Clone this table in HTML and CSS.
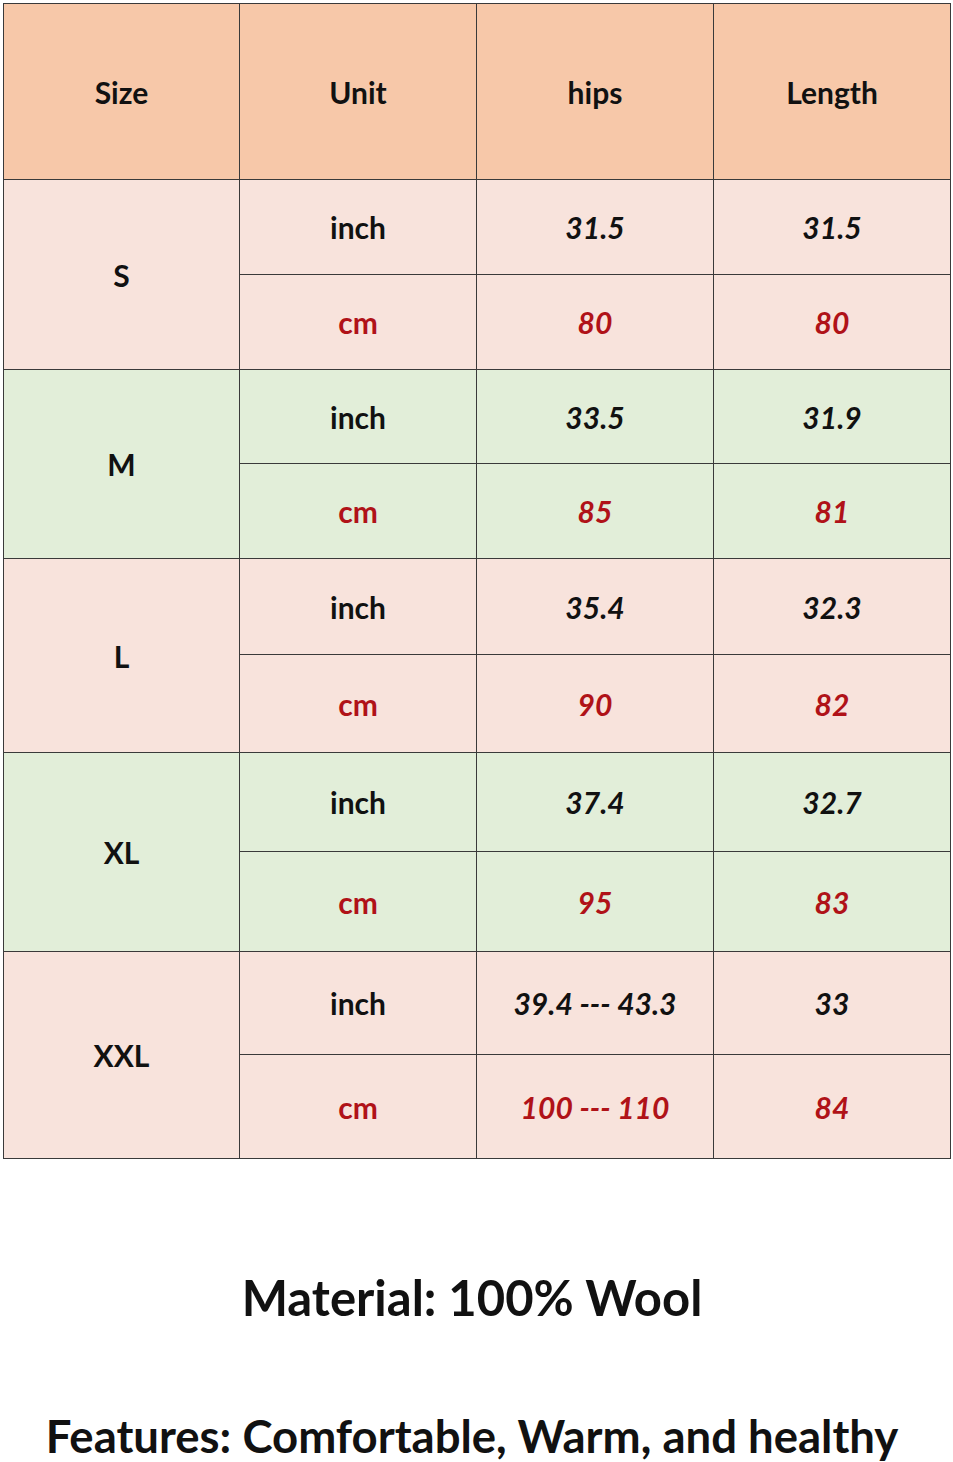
FILE: index.html
```html
<!DOCTYPE html>
<html>
<head>
<meta charset="utf-8">
<link rel="stylesheet" href="styles.css">
</head>
<body>
<div class="page">
  <table class="size-table">
    <colgroup><col class="c1"><col class="c2"><col class="c3"><col class="c4"></colgroup>
    <thead>
      <tr class="head"><th>Size</th><th>Unit</th><th>hips</th><th>Length</th></tr>
    </thead>
    <tbody>
      <tr class="pink h95"><td rowspan="2" class="size">S</td><td>inch</td><td class="num">31.5</td><td class="num">31.5</td></tr>
      <tr class="pink h95"><td class="red">cm</td><td class="num red">80</td><td class="num red">80</td></tr>
      <tr class="green h94"><td rowspan="2" class="size">M</td><td>inch</td><td class="num">33.5</td><td class="num">31.9</td></tr>
      <tr class="green h95"><td class="red">cm</td><td class="num red">85</td><td class="num red">81</td></tr>
      <tr class="pink h96"><td rowspan="2" class="size">L</td><td>inch</td><td class="num">35.4</td><td class="num">32.3</td></tr>
      <tr class="pink h98"><td class="red">cm</td><td class="num red">90</td><td class="num red">82</td></tr>
      <tr class="green h99"><td rowspan="2" class="size">XL</td><td>inch</td><td class="num">37.4</td><td class="num">32.7</td></tr>
      <tr class="green h100"><td class="red">cm</td><td class="num red">95</td><td class="num red">83</td></tr>
      <tr class="pink h103"><td rowspan="2" class="size">XXL</td><td>inch</td><td class="num">39.4 --- 43.3</td><td class="num">33</td></tr>
      <tr class="pink h104"><td class="red">cm</td><td class="num red">100 --- 110</td><td class="num red">84</td></tr>
    </tbody>
  </table>
  <div class="material">Material: 100% Wool</div>
  <div class="features">Features: Comfortable, Warm, and healthy</div>
</div>
</body>
</html>
```
FILE: styles.css
```css
html, body {
  margin: 0;
  padding: 0;
  background: #ffffff;
}
.page {
  width: 953px;
  height: 1462px;
  padding: 3px 0 0 3px;
  box-sizing: border-box;
  font-family: "Lato", "Liberation Sans", sans-serif;
  color: #111111;
}
.size-table {
  border-collapse: collapse;
  table-layout: fixed;
  width: 948px;
}
.c1 { width: 236px; }
.c2 { width: 237px; }
.c3 { width: 237px; }
.c4 { width: 237px; }
.size-table th,
.size-table td {
  border: 1px solid #3a3a3a;
  text-align: center;
  vertical-align: middle;
  padding: 0;
  font-weight: 700;
  font-size: 30px;
  line-height: 1;
}
.head th {
  background: #f7c8a9;
  height: 175px;
}
.pink td { background: #f8e3dc; }
.green td { background: #e2eed9; }
.num { font-style: italic; }
.red { color: #b01218; }
.h94 td { height: 93px; }
.h95 td { height: 94px; }
.h96 td { height: 95px; }
.h98 td { height: 97px; }
.h99 td { height: 98px; }
.h100 td { height: 99px; }
.h103 td { height: 102px; }
.h104 td { height: 103px; }
.size-table td.size { height: auto; }
.material {
  margin-top: 110px;
  text-align: center;
  font-weight: 700;
  font-size: 49px;
  line-height: 56px;
  padding-right: 12px;
}
.features {
  margin-top: 83px;
  text-align: center;
  font-weight: 700;
  font-size: 45.5px;
  line-height: 56px;
  white-space: nowrap;
  padding-right: 12px;
}
```
